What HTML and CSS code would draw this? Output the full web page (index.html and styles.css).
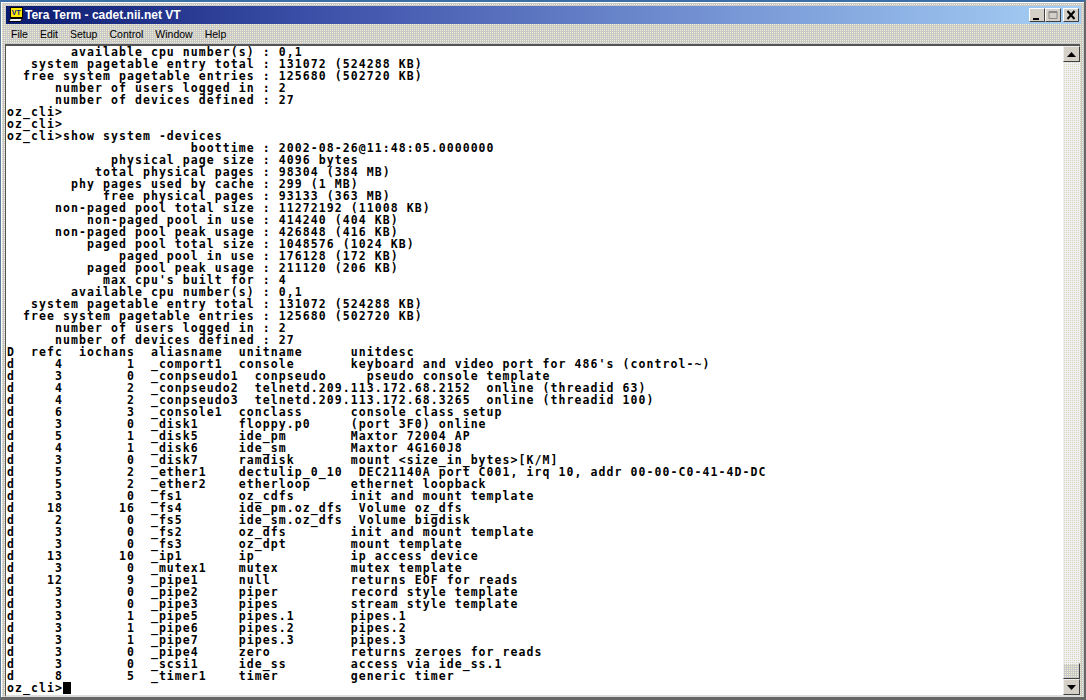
FILE: index.html
```html
<!DOCTYPE html>
<html lang="en">
<head>
<meta charset="utf-8">
<title>Tera Term - cadet.nii.net VT</title>
<link rel="stylesheet" href="styles.css">
</head>
<body>
<div class="window">
  <div class="titlebar">
    <svg class="appicon" width="16" height="16" viewBox="0 0 16 16">
      <rect x="2.500" y="0.500" width="12" height="10" fill="#ffe800" stroke="#000" stroke-width="1"/>
      <text x="3.800" y="8" class="icontext">VT</text>
      <path d="M2.500 11.500h12l-2 3H0.500z" fill="#f0f0f0" stroke="#000" stroke-width="1"/>
    </svg>
    <span class="title">Tera Term - cadet.nii.net VT</span>
    <div class="controls">
      <span class="cbtn"><svg width="14" height="12" viewBox="0 0 14 12"><rect x="3" y="9" width="6" height="2" fill="#000"/></svg></span>
      <span class="cbtn"><svg width="14" height="12" viewBox="0 0 14 12"><path d="M3 2.500h8v7H3z M3 3.500h8" fill="none" stroke="#888"/></svg></span>
      <span class="cbtn close"><svg width="14" height="12" viewBox="0 0 14 12"><path d="M3.500 2l7 8M10.500 2l-7 8" fill="none" stroke="#000" stroke-width="2"/></svg></span>
    </div>
  </div>
  <div class="menubar">
    <span class="menuitem">File</span>
    <span class="menuitem">Edit</span>
    <span class="menuitem">Setup</span>
    <span class="menuitem">Control</span>
    <span class="menuitem">Window</span>
    <span class="menuitem">Help</span>
  </div>
  <div class="client">
<pre class="terminal">        available cpu number(s) : 0,1
   system pagetable entry total : 131072 (524288 KB)
  free system pagetable entries : 125680 (502720 KB)
      number of users logged in : 2
      number of devices defined : 27
oz_cli&gt;
oz_cli&gt;
oz_cli&gt;show system -devices
                       boottime : 2002-08-26@11:48:05.0000000
             physical page size : 4096 bytes
           total physical pages : 98304 (384 MB)
        phy pages used by cache : 299 (1 MB)
            free physical pages : 93133 (363 MB)
      non-paged pool total size : 11272192 (11008 KB)
          non-paged pool in use : 414240 (404 KB)
      non-paged pool peak usage : 426848 (416 KB)
          paged pool total size : 1048576 (1024 KB)
              paged pool in use : 176128 (172 KB)
          paged pool peak usage : 211120 (206 KB)
            max cpu's built for : 4
        available cpu number(s) : 0,1
   system pagetable entry total : 131072 (524288 KB)
  free system pagetable entries : 125680 (502720 KB)
      number of users logged in : 2
      number of devices defined : 27
D  refc  iochans  aliasname  unitname      unitdesc
d     4        1  _comport1  console       keyboard and video port for 486's (control-~)
d     3        0  _conpseudo1  conpseudo     pseudo console template
d     4        2  _conpseudo2  telnetd.209.113.172.68.2152  online (threadid 63)
d     4        2  _conpseudo3  telnetd.209.113.172.68.3265  online (threadid 100)
d     6        3  _console1  conclass      console class setup
d     3        0  _disk1     floppy.p0     (port 3F0) online
d     5        1  _disk5     ide_pm        Maxtor 72004 AP
d     4        1  _disk6     ide_sm        Maxtor 4G160J8
d     3        0  _disk7     ramdisk       mount &lt;size_in_bytes&gt;[K/M]
d     5        2  _ether1    dectulip_0_10  DEC21140A port C001, irq 10, addr 00-00-C0-41-4D-DC
d     5        2  _ether2    etherloop     ethernet loopback
d     3        0  _fs1       oz_cdfs       init and mount template
d    18       16  _fs4       ide_pm.oz_dfs  Volume oz_dfs
d     2        0  _fs5       ide_sm.oz_dfs  Volume bigdisk
d     3        0  _fs2       oz_dfs        init and mount template
d     3        0  _fs3       oz_dpt        mount template
d    13       10  _ip1       ip            ip access device
d     3        0  _mutex1    mutex         mutex template
d    12        9  _pipe1     null          returns EOF for reads
d     3        0  _pipe2     piper         record style template
d     3        0  _pipe3     pipes         stream style template
d     3        1  _pipe5     pipes.1       pipes.1
d     3        1  _pipe6     pipes.2       pipes.2
d     3        1  _pipe7     pipes.3       pipes.3
d     3        0  _pipe4     zero          returns zeroes for reads
d     3        0  _scsi1     ide_ss        access via ide_ss.1
d     8        5  _timer1    timer         generic timer
oz_cli&gt;<span class="cursor"> </span></pre>
    <div class="scrollbar">
      <div class="sbtn"><svg width="9" height="5" viewBox="0 0 9 5"><path d="M4.500 0L9 5H0z" fill="#000"/></svg></div>
      <div class="track"></div>
      <div class="sbtn thumb"></div>
      <div class="sbtn"><svg width="9" height="5" viewBox="0 0 9 5"><path d="M0 0h9L4.500 5z" fill="#000"/></svg></div>
    </div>
  </div>
</div>
</body>
</html>
```
FILE: styles.css
```css
html, body {
  margin: 0;
  height: 700px;
  overflow: hidden;
  background: #3a6ea5;
}
.window {
  box-sizing: border-box;
  height: 700px;
  width: 1086px;
  display: flex;
  flex-direction: column;
  border-top: 2px solid #3a6ea5;
  border-left: 1px solid #5a7a9a;
  border-right: 2px solid #666;
  border-bottom: 3px solid #666;
  background: conic-gradient(#f0f0d0 25%, transparent 0) 0 0 / 2px 2px, #c8c8c8;
  padding: 2px 4px 0 4px;
  box-shadow: inset 1px 1px 0 #fff;
}
.titlebar {
  height: 18px;
  margin-top: 2px;
  flex: none;
  display: flex;
  align-items: center;
  padding-left: 2px;
  margin-left: 1px;
  margin-right: -1px;
  background: linear-gradient(90deg, #0a1a6e 0%, #3c4fa8 28%, #7b9bd8 70%, #a6d0f5 100%);
}
.appicon { flex: none; margin-right: 1px; }
.icontext {
  font: bold 7px "Liberation Sans", sans-serif;
  fill: #00209a;
}
.title {
  font: bold 12px "Liberation Sans", sans-serif;
  color: #fff;
}
.controls {
  margin-left: auto;
  display: flex;
  padding-right: 2px;
}
.cbtn {
  box-sizing: border-box;
  width: 16px;
  height: 14px;
  display: flex;
  align-items: center;
  justify-content: center;
  background: #d4d0c8;
  border: 1px solid;
  border-color: #fff #404040 #404040 #fff;
}
.close { margin-left: 2px; }
.menubar {
  height: 20px;
  flex: none;
  display: flex;
  align-items: center;
  font: 10.500px "Liberation Sans", sans-serif;
  color: #000;
}
.menuitem { padding: 0 6px; }
.client {
  flex: 1;
  min-height: 0;
  display: flex;
  background: #fff;
  border-top: 2px solid #555;
  border-left: 1px solid #555;
  border-bottom: 2px solid #ddd;
}
.terminal {
  flex: 1;
  margin: 0;
  padding: 0 0 0 1px;
  font-family: "DejaVu Sans Mono", monospace;
  font-weight: bold;
  font-size: 11.500px;
  letter-spacing: 1.070px;
  line-height: 12px;
  color: #000;
  overflow: hidden;
}
.cursor {
  display: inline-block;
  width: 8px;
  height: 12px;
  background: #000;
  vertical-align: top;
}
.scrollbar {
  width: 17px;
  flex: none;
  display: flex;
  flex-direction: column;
}
.sbtn {
  box-sizing: border-box;
  height: 16px;
  flex: none;
  display: flex;
  align-items: center;
  justify-content: center;
  background: #d4d0c8;
  border: 1px solid;
  border-color: #eee #404040 #404040 #eee;
}
.thumb {
  background: conic-gradient(#f0f0d0 25%, transparent 0) 0 0 / 2px 2px, #c8c8c8;
}
.track {
  flex: 1;
  background: conic-gradient(#d8d8c0 25%, transparent 0) 0 0 / 2px 2px, #f0f0f0;
}
```
